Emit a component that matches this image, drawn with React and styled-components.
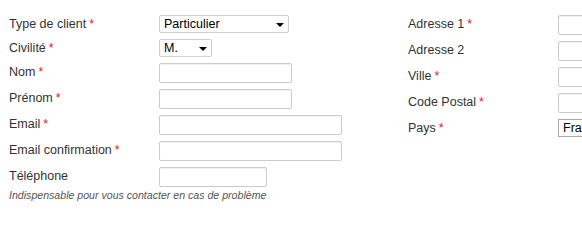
import React from "react";
import styled, { createGlobalStyle } from "styled-components";

const GlobalStyle = createGlobalStyle`
  body {
    margin: 0;
    background: #fff;
    font-family: "Liberation Sans", Arial, sans-serif;
    color: #333;
    overflow: hidden;
  }
`;

const Page = styled.div`
  display: flex;
  align-items: flex-start;
  padding: 15px 0 0 9px;
  width: 700px;
`;

const Column = styled.div`
  display: flex;
  flex-direction: column;
  gap: 6px;
  width: ${(p) => p.width}px;
`;

const Row = styled.div`
  display: grid;
  grid-template-columns: 150px auto;
  align-items: start;
`;

const Label = styled.label`
  font-size: 12.5px;
  line-height: 14px;
  padding-top: 2px;
  color: #333;
`;

const Star = styled.span`
  color: #e8141b;
  margin-left: 3px;
`;

const Input = styled.input`
  box-sizing: border-box;
  width: ${(p) => p.width}px;
  height: 20px;
  border: 1px solid #ccc;
  border-radius: 2px;
  box-shadow: inset 0 1px 1px rgba(0, 0, 0, 0.06);
  background: #fff;
  padding: 0 4px;
  margin: 0;
  font-family: inherit;
  font-size: 12px;
`;

const SelectBox = styled.div`
  box-sizing: border-box;
  width: ${(p) => p.width}px;
  height: 18px;
  display: flex;
  align-items: center;
  justify-content: space-between;
  padding: 0 4px 0 4px;
  border: 1px solid ${(p) => (p.dark ? "#a9a9a9" : "#d0d0d0")};
  border-radius: ${(p) => (p.dark ? 0 : 2)}px;
  background: #fff;
  font-size: 12.5px;
  color: #000;
`;

const Arrow = styled.span`
  width: 0;
  height: 0;
  border-left: 4px solid transparent;
  border-right: 4px solid transparent;
  border-top: 4px solid #000;
  margin-top: 1px;
`;

const Help = styled.p`
  margin: -4px 0 0;
  font-size: 10.6px;
  line-height: 13px;
  font-style: italic;
  color: #555;
`;

const Field = ({ label, required, children }) => (
  <Row>
    <Label>
      {label}
      {required && <Star>*</Star>}
    </Label>
    {children}
  </Row>
);

export default function App() {
  return (
    <>
      <GlobalStyle />
      <Page>
        <Column width={399}>
          <Field label="Type de client" required>
            <SelectBox width={130}>
              Particulier
              <Arrow />
            </SelectBox>
          </Field>
          <Field label="Civilité" required>
            <SelectBox width={53}>
              M.
              <Arrow />
            </SelectBox>
          </Field>
          <Field label="Nom" required>
            <Input width={133} />
          </Field>
          <Field label="Prénom" required>
            <Input width={133} />
          </Field>
          <Field label="Email" required>
            <Input width={183} />
          </Field>
          <Field label="Email confirmation" required>
            <Input width={183} />
          </Field>
          <Field label="Téléphone">
            <Input width={108} />
          </Field>
          <Help>Indispensable pour vous contacter en cas de problème</Help>
        </Column>
        <Column width={300}>
          <Field label="Adresse 1" required>
            <Input width={133} />
          </Field>
          <Field label="Adresse 2">
            <Input width={133} />
          </Field>
          <Field label="Ville" required>
            <Input width={133} />
          </Field>
          <Field label="Code Postal" required>
            <Input width={133} />
          </Field>
          <Field label="Pays" required>
            <SelectBox width={130} dark>
              France
              <Arrow />
            </SelectBox>
          </Field>
        </Column>
      </Page>
    </>
  );
}
